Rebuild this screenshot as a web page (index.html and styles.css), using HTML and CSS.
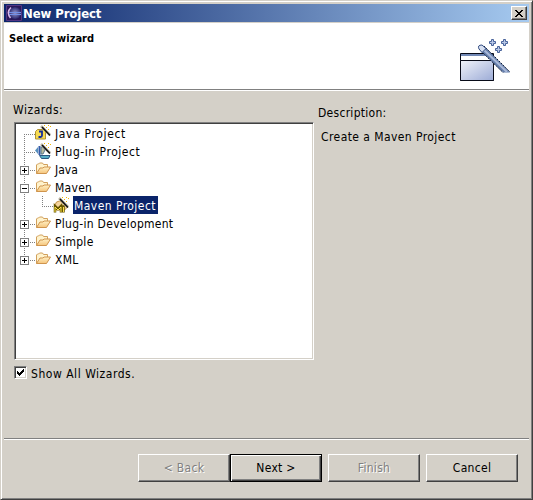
FILE: index.html
```html
<!DOCTYPE html>
<html lang="en">
<head>
<meta charset="utf-8">
<title>New Project</title>
<link rel="stylesheet" href="styles.css">
</head>
<body>
<svg class="defs" width="0" height="0">
  <defs>
    <linearGradient id="fold" x1="0" y1="0" x2="0" y2="1"><stop offset="0" stop-color="#fff0c4"/><stop offset="1" stop-color="#f5c57c"/></linearGradient>
    <linearGradient id="box" x1="0" y1="0" x2="1" y2="1"><stop offset="0" stop-color="#f0f3fa"/><stop offset="1" stop-color="#9cabd6"/></linearGradient>
    <radialGradient id="orb"><stop offset="0" stop-color="#9494cb"/><stop offset="1" stop-color="#2c2a70"/></radialGradient>
    <symbol id="folder" viewBox="0 0 16 16">
      <path d="M1.500 12.500v-8.500l1-1h1l1-1h3l1 1.500h4v3" fill="#fff3cd" stroke="#d1a05c"/>
      <path d="M1.500 12.500L5 7h3l1-1h6.500L11.500 12.500z" fill="url(#fold)" stroke="#cf944d"/>
    </symbol>
    <symbol id="wand" viewBox="0 0 16 16">
      <path d="M6 1l9 9" stroke="#c0b9a7" stroke-width="2.500"/>
      <path d="M7 2l8 8.500" stroke="#111" stroke-width="1.600"/>
      <path d="M9 0h1v1h-1zM13 0h1v1h-1zM11 2h1v1h-1zM15 1h1v1h-1zM13 4h1v1h-1z" fill="#f1b800"/>
    </symbol>
  </defs>
</svg>
<main class="window">
  <header class="titlebar">
    <svg class="logo" viewBox="0 0 16 16"><path fill="#2a1758" d="M0 0h16v16H0z"/><circle cx="9" cy="8" r="6" fill="url(#orb)"/><path d="M5 2.500Q0 7 4.500 13" fill="none" stroke="#d8b8e8" stroke-width="1.500"/><path d="M3 7.500h13M3 9.500h13" stroke="#7390e6"/><path d="M.5.5h15v15H.5z" fill="none" stroke="#533583"/></svg>
    <h1>New Project</h1>
    <button class="close" aria-label="Close"><svg width="8" height="7" viewBox="0 0 8 7" shape-rendering="crispEdges"><path d="M0 0h2v1h1v1h2v-1h1v-1h2v1h-1v1h-1v1h-1v1h1v1h1v1h1v1h-2v-1h-1v-1h-2v1h-1v1h-2v-1h1v-1h1v-1h1v-1h-1v-1h-1v-1h-1z"/></svg></button>
  </header>
  <section class="banner">
    <h2>Select a wizard</h2>
    <svg class="art" viewBox="0 0 60 54">
      <path d="M5.500 21.500h33v27h-33z" fill="#fff" stroke="#080b18"/>
      <path d="M6 22h32v2H6z" fill="#7188b5"/>
      <path d="M5.500 28.500h33v20h-33z" fill="url(#box)" stroke="#080b18"/>
      <path d="M24 17l24 23.500h7L29 14z" fill="#647eac"/>
      <path d="M28 17l24 23" stroke="#a9b8d8" stroke-width="2"/>
      <path d="M24 17l24 23.500M29 14l26 26" fill="none" stroke="#101c38" stroke-dasharray="2 1"/>
      <path d="M24 17q-2-4 3-4l4 3.500-4 4z" fill="#d6dff1" stroke="#354f83"/>
      <g fill="#b9c8e5" stroke="#48639b"><path id="spark" d="M36.500 7.500h2v2h2v2h-2v2h-2v-2h-2v-2h2z"/><use href="#spark" x="12"/><use href="#spark" x="6" y="7"/></g>
    </svg>
  </section>
  <section class="content">
    <div class="left">
      <p class="wizards wide">Wizards:</p>
      <ul class="tree">
        <li class="leaf"><i class="branch"></i><svg class="icon" viewBox="0 0 16 16"><path d="M.5 6.500l2-2h6l2 2v7.500H.5z" fill="#f7dc52" stroke="#b19332"/><path d="M4 6.500h3v4q0 1.500-1.500 1.500H3.500" fill="none" stroke="#172f9b" stroke-width="1.800"/><use href="#wand"/></svg><span class="wider">Java Project</span></li>
        <li class="leaf"><i class="branch"></i><svg class="icon" viewBox="0 0 16 16"><path d="M0 7.500L3 4v7z" fill="#568fbd"/><path d="M4.500 3v9" stroke="#345aa8" stroke-width="2"/><path d="M6 4h2l2 3-2 4H6z" fill="#b9ba9a" stroke="#55758d"/><path d="M4.500 12.500h10.500l-1.500 3h-7z" fill="#57aec7" stroke="#295780"/><use href="#wand"/></svg><span class="wide">Plug-in Project</span></li>
        <li><i class="branch"></i><b class="expander plus"></b><svg class="icon"><use href="#folder"/></svg><span>Java</span></li>
        <li><i class="branch"></i><b class="expander"></b><svg class="icon"><use href="#folder"/></svg><span class="snug">Maven</span></li>
        <li class="child"><i class="branch"></i><svg class="icon" viewBox="0 0 16 16"><path d="M1.500 9l2-4 3-1 6 3 2 3-3 3h-10z" fill="#f6d49b" stroke="#c49347"/><path d="M2 15.500V9l3 3 3-3v6.500M7.500 9.500h3v6" fill="none" stroke="#665600" stroke-width="2.500"/><path d="M2 15V10l3 3 3-3v5M10.500 10v5" fill="none" stroke="#ffe34d"/><use href="#wand"/></svg><span class="selected">Maven Project</span></li>
        <li><i class="branch"></i><b class="expander plus"></b><svg class="icon"><use href="#folder"/></svg><span class="snug">Plug-in Development</span></li>
        <li><i class="branch"></i><b class="expander plus"></b><svg class="icon"><use href="#folder"/></svg><span class="snug">Simple</span></li>
        <li><i class="branch"></i><b class="expander plus"></b><svg class="icon"><use href="#folder"/></svg><span class="snug">XML</span></li>
      </ul>
      <label class="show"><span class="check"><svg width="7" height="7" viewBox="0 0 7 7" shape-rendering="crispEdges"><path d="M0 2h1v1h1v1h1v-1h1v-1h1v-1h1v-1h1v3h-1v1h-1v1h-1v1h-1v1h-1v-1h-1v-1h-1z"/></svg></span><span class="wide caption">Show All Wizards.</span></label>
    </div>
    <div class="right">
      <p class="snug">Description:</p>
      <p class="description">Create a Maven Project</p>
    </div>
  </section>
  <footer class="actions">
    <button class="disabled" disabled>&lt; Back</button>
    <button class="default">Next &gt;</button>
    <button class="disabled finish" disabled>Finish</button>
    <button>Cancel</button>
  </footer>
</main>
</body>
</html>
```
FILE: styles.css
```css
* { box-sizing: border-box; }
body { margin: 0; background: #d4d0c8; color: #000; font: 12px/18px "DejaVu Sans Condensed", "DejaVu Sans", sans-serif; font-stretch: condensed; }
.defs { position: absolute; }
h1, h2, p, ul { margin: 0; padding: 0; }
.window { width: 533px; height: 500px; padding: 3px 2px 0 3px; border: 1px solid #404040; border-top-color: #d4d0c8; border-left-color: #d4d0c8; box-shadow: inset 1px 1px #fff, inset -1px -1px #808080; display: flex; flex-direction: column; background: #d4d0c8; overflow: hidden; }
.titlebar { width: 525px; height: 18px; flex: none; display: flex; align-items: center; padding: 0 2px; background: linear-gradient(90deg, #0a246a, #a6caf0); }
.logo { width: 16px; height: 16px; flex: none; }
.titlebar h1 { margin-left: 1px; color: #fff; font-size: 13px; font-weight: bold; height: 18px; line-height: 20px; letter-spacing: -.1px; white-space: nowrap; }
button { padding: 0; color: #000; background: #d4d0c8; border: 1px solid; border-color: #fff #404040 #404040 #fff; box-shadow: inset -1px -1px #808080; border-radius: 0; font: inherit; }
.close { width: 16px; height: 14px; margin-left: auto; display: flex; align-items: center; justify-content: center; }
.banner { width: 525px; height: 68px; flex: none; margin-top: 1px; padding: 8px 14px 0 5px; display: flex; justify-content: space-between; align-items: flex-start; background: #fff; border-bottom: 1px solid #fff; box-shadow: inset 0 -1px #808080; }
.banner h2 { font-size: 11px; font-weight: bold; line-height: 16px; }
.art { width: 60px; height: 54px; margin-top: 1px; }
.content { width: 525px; height: 347px; flex: none; display: flex; padding-left: 9px; }
.left { width: 305px; }
.snug { letter-spacing: .28px; }
.wide { letter-spacing: .53px; }
.wider { letter-spacing: .65px; }
.wizards { height: 31px; padding-top: 10px; }
.tree { width: 300px; height: 238px; margin-left: 1px; list-style: none; background: #fff; border: 1px solid; border-color: #808080 #fff #fff #808080; box-shadow: inset 1px 1px #404040, inset -1px -1px #d4d0c8; padding: 1px; }
.tree li { height: 18px; display: flex; align-items: center; padding-left: 19px; position: relative; white-space: nowrap; }
.branch { position: absolute; left: 8px; top: 0; width: 1px; height: 18px; background: repeating-linear-gradient(#808080 0 1px, transparent 1px 2px); }
.tree li:first-child .branch { top: 10px; height: 8px; }
.tree li:last-child .branch { height: 10px; }
.branch::after { content: ""; position: absolute; left: 0; top: 10px; width: 11px; height: 1px; background: repeating-linear-gradient(90deg, #808080 0 1px, transparent 1px 2px); }
.tree li:first-child .branch::after { top: 0; }
.child .branch::after { display: none; }
.tree .child { padding-left: 37px; }
.child::after { content: ""; position: absolute; left: 26px; top: 0; width: 11px; height: 11px; background: repeating-linear-gradient(#808080 0 1px, transparent 1px 2px) left / 1px 11px no-repeat, repeating-linear-gradient(90deg, #808080 0 1px, transparent 1px 2px) bottom / 11px 1px no-repeat; }
.expander { position: absolute; left: 4px; top: 6px; width: 9px; height: 9px; border: 1px solid #808080; background: linear-gradient(#000, #000) center / 5px 1px no-repeat #fff; }
.plus { background: linear-gradient(#000, #000) center / 5px 1px no-repeat, linear-gradient(#000, #000) center / 1px 5px no-repeat, #fff; }
.icon { width: 16px; height: 16px; flex: none; margin-right: 2px; }
.tree span { height: 18px; line-height: 20px; padding: 0 2px; }
.tree .selected { width: 85px; margin-left: 2px; padding: 0 1px; letter-spacing: .45px; background: #0a246a; color: #fff; }
.show { display: flex; align-items: center; height: 18px; margin: 4px 0 0 1px; }
.caption { height: 18px; line-height: 20px; }
.check { width: 13px; height: 13px; background: #fff; border: 1px solid; border-color: #808080 #fff #fff #808080; box-shadow: inset 1px 1px #404040, inset -1px -1px #d4d0c8; margin: -1px 4px 0 0; display: flex; align-items: center; justify-content: center; }
.right { padding-top: 13px; }
.description { padding: 6px 0 0 3px; letter-spacing: .43px; }
.actions { width: 525px; height: 60px; border-top: 1px solid #808080; box-shadow: inset 0 1px #fff; display: flex; justify-content: flex-end; padding: 15px 11px 0 0; }
.actions button { width: 92px; height: 28px; letter-spacing: .3px; }
.actions .default { border: 1px solid #000; box-shadow: inset 1px 1px #fff, inset -1px -1px #404040, inset -2px -2px #808080; }
.actions .disabled { color: #808080; text-shadow: 1px 1px #fff; }
.actions .finish { margin: 0 6px; }
```
